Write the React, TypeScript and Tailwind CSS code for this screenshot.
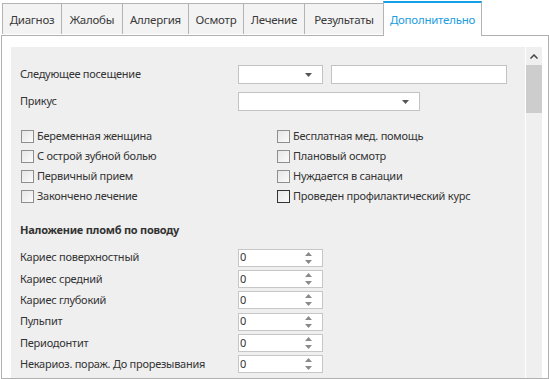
import React from 'react';

const tabs = [
  { label: 'Диагноз', w: 'w-[60px]' },
  { label: 'Жалобы', w: 'w-[62px]' },
  { label: 'Аллергия', w: 'w-[67px]' },
  { label: 'Осмотр', w: 'w-[56px]' },
  { label: 'Лечение', w: 'w-[62px]' },
  { label: 'Результаты', w: 'w-[80px]' },
];

const leftChecks = ['Беременная женщина', 'С острой зубной болью', 'Первичный прием', 'Закончено лечение'];
const rightChecks = ['Бесплатная мед. помощь', 'Плановый осмотр', 'Нуждается в санации', 'Проведен профилактический курс'];

const counters = [
  'Кариес поверхностный',
  'Кариес средний',
  'Кариес глубокий',
  'Пульпит',
  'Периодонтит',
  'Некариоз. пораж. До прорезывания',
];

// маленький треугольник для выпадающих списков
const Caret = () => (
  <svg width="7" height="4" viewBox="0 0 7 4" className="block">
    <path d="M0 0 H7 L3.5 4 Z" fill="#555" />
  </svg>
);

const Dropdown = ({ w }: { w: string }) => (
  <div className={`${w} h-[19px] border border-[#c3c3c3] bg-white flex items-center justify-end pr-[10px]`}>
    <Caret />
  </div>
);

const Check = ({ label, focused }: { label: string; focused?: boolean }) => (
  <div className="h-[20px] flex items-center">
    <span
      className={`ml-px w-[13px] h-[13px] border bg-gradient-to-br from-[#e6e6e6] to-[#fbfbfb] ${
        focused ? 'border-[#333]' : 'border-[#8e8e8e]'
      }`}
    />
    <span className="ml-[3px]">{label}</span>
  </div>
);

const Spinner = () => (
  <div className="w-[85px] h-[18px] border border-[#c6c6c6] bg-white flex items-center pl-px">
    <span className="flex-1">0</span>
    <div className="w-[8px] mr-[10px] flex flex-col items-center gap-[4px]">
      <svg width="7" height="4" viewBox="0 0 7 4" className="block">
        <path d="M0 4 H7 L3.5 0 Z" fill="#8a8a8a" />
      </svg>
      <svg width="7" height="4" viewBox="0 0 7 4" className="block">
        <path d="M0 0 H7 L3.5 4 Z" fill="#8a8a8a" />
      </svg>
    </div>
  </div>
);

export default function App() {
  return (
    <div className="w-[549px] h-[379px] bg-white overflow-hidden text-[11px] tracking-[-0.25px] text-[#333] font-['Noto_Sans',sans-serif]">
      {/* вкладки */}
      <div className="h-[35px] flex items-end pl-[2px] relative z-10">
        {tabs.map((t) => (
          <div
            key={t.label}
            className={`${t.w} h-[31px] mb-px -mr-px pt-px border border-b-0 border-[#b4b4b4] bg-[#f3f3f3] flex items-center justify-center text-[11.5px] text-[#3a3a3a]`}
          >
            {t.label}
          </div>
        ))}
        <div className="w-[99px] h-[35px] -mb-px bg-white border-x border-[#b4b4b4] border-t-[2px] border-t-[#12a0e6] flex items-center justify-center text-[11.5px] text-[#1c9de0]">
          Дополнительно
        </div>
      </div>

      {/* панель */}
      <div className="ml-px w-[548px] h-[344px] border border-[#b0b0b0] bg-white pt-[11px] pl-[9px] pr-[6px]">
        <div className="h-[331px] bg-[#efefef] flex overflow-hidden">
          <div className="flex-1 pl-[9px] pt-[18px]">
            <div className="h-[19px] flex items-center">
              <span className="w-[218px]">Следующее посещение</span>
              <Dropdown w="w-[85px]" />
              <div className="ml-[8px] w-[176px] h-[19px] border border-[#c3c3c3] bg-white" />
            </div>
            <div className="h-[19px] mt-[8px] flex items-center">
              <span className="w-[218px]">Прикус</span>
              <Dropdown w="w-[182px]" />
            </div>

            <div className="mt-[15px] flex">
              <div className="w-[256px]">
                {leftChecks.map((c) => (
                  <Check key={c} label={c} />
                ))}
              </div>
              <div>
                {rightChecks.map((c, i) => (
                  <Check key={c} label={c} focused={i === 3} />
                ))}
              </div>
            </div>

            <div className="mt-[14px] h-[20px] flex items-center font-bold">Наложение пломб по поводу</div>

            <div className="mt-[7px]">
              {counters.map((c) => (
                <div key={c} className="h-[21.3px] flex items-center">
                  <span className="w-[218px]">{c}</span>
                  <Spinner />
                </div>
              ))}
            </div>
          </div>

          {/* полоса прокрутки */}
          <div className="w-[17px] border-l border-white flex flex-col">
            <div className="h-[18px] flex items-center justify-center">
              <svg width="8" height="5" viewBox="0 0 8 5" className="block">
                <path d="M0.5 4.5 L4 1 L7.5 4.5" stroke="#444" strokeWidth="1.5" fill="none" />
              </svg>
            </div>
            <div className="h-[48px] bg-[#cdcdcd]" />
          </div>
        </div>
      </div>
    </div>
  );
}
